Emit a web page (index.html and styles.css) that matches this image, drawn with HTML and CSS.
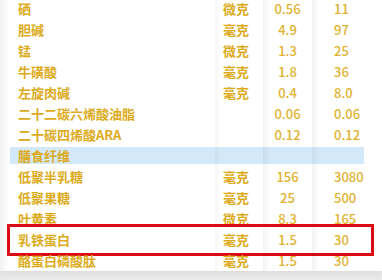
FILE: index.html
```html
<!DOCTYPE html>
<html lang="zh">
<head>
<meta charset="utf-8">
<link rel="stylesheet" href="styles.css">
</head>
<body>
<div class="card">
  <div class="table">
    <div class="row"><span class="name">硒</span><span class="unit">微克</span><span class="num">0.56</span><span class="per">11</span></div>
    <div class="row"><span class="name">胆碱</span><span class="unit">毫克</span><span class="num">4.9</span><span class="per">97</span></div>
    <div class="row"><span class="name">锰</span><span class="unit">微克</span><span class="num">1.3</span><span class="per">25</span></div>
    <div class="row"><span class="name">牛磺酸</span><span class="unit">毫克</span><span class="num">1.8</span><span class="per">36</span></div>
    <div class="row"><span class="name">左旋肉碱</span><span class="unit">毫克</span><span class="num">0.4</span><span class="per">8.0</span></div>
    <div class="row"><span class="name">二十二碳六烯酸油脂</span><span class="unit"></span><span class="num">0.06</span><span class="per">0.06</span></div>
    <div class="row"><span class="name">二十碳四烯酸ARA</span><span class="unit"></span><span class="num">0.12</span><span class="per">0.12</span></div>
    <div class="row section"><span class="name">膳食纤维</span><span class="unit"></span><span class="num"></span><span class="per"></span></div>
    <div class="row"><span class="name">低聚半乳糖</span><span class="unit">毫克</span><span class="num">156</span><span class="per">3080</span></div>
    <div class="row"><span class="name">低聚果糖</span><span class="unit">毫克</span><span class="num">25</span><span class="per">500</span></div>
    <div class="row"><span class="name">叶黄素</span><span class="unit">微克</span><span class="num">8.3</span><span class="per">165</span></div>
    <div class="row marked"><span class="name">乳铁蛋白</span><span class="unit">毫克</span><span class="num">1.5</span><span class="per">30</span><span class="highlight"></span></div>
    <div class="row"><span class="name">酪蛋白磷酸肽</span><span class="unit">毫克</span><span class="num">1.5</span><span class="per">30</span></div>
  </div>
</div>
</body>
</html>
```

FILE: styles.css
```css
html, body {
  margin: 0;
  padding: 0;
}
body {
  width: 382px;
  height: 280px;
  overflow: hidden;
  background: linear-gradient(#eeeeee, #e9e9e9);
  font-family: "Noto Sans CJK SC", "Noto Sans", sans-serif;
  font-size: 13px;
  font-weight: 700;
  color: #dcab1c;
}
.card {
  background: #ffffff;
  margin-top: -2px;
  padding-left: 10px;
  padding-right: 18px;
  background-image: linear-gradient(to right, #f1f1f1 0, #ffffff 9px);
  box-shadow: 0 3px 6px rgba(0,0,0,0.05);
}
.table {
  display: flex;
  flex-direction: column;
}
.row {
  position: relative;
  display: grid;
  grid-template-columns: 205px 48px 49px 52px;
  height: 21px;
  line-height: 21px;
}
.row span {
  white-space: nowrap;
}
.name {
  padding-left: 8px;
}
.unit {
  padding-left: 8px;
  background: linear-gradient(to right, rgba(0,0,0,0.035) 0, rgba(0,0,0,0) 6px);
}
.num {
  text-align: center;
  font-weight: 500;
  color: #dfb230;
  background: linear-gradient(to right, rgba(0,0,0,0.05) 0, rgba(0,0,0,0) 7px);
}
.per {
  padding-left: 22px;
  font-weight: 500;
  color: #dfb230;
  background: linear-gradient(to right, rgba(0,0,0,0.05) 0, rgba(0,0,0,0) 7px);
}
.section {
  background: linear-gradient(transparent 2px, #d3e8f8 2px, #d3e8f8 19px, transparent 19px);
}
.highlight {
  position: absolute;
  left: -3px;
  top: -5px;
  width: 361px;
  height: 26px;
  border: 3px solid #dc0a14;
}
```
